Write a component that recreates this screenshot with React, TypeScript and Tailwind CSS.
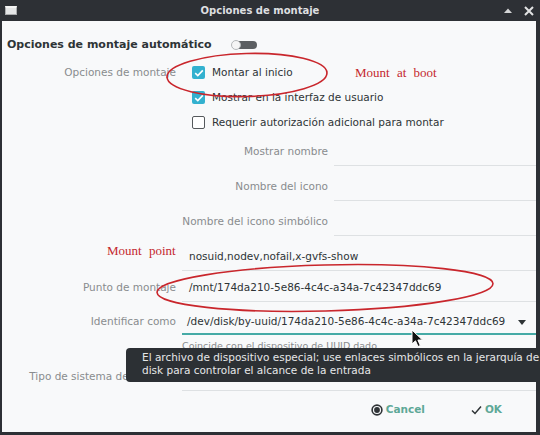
import React from "react";

const Checkbox = ({ checked }: { checked: boolean }) =>
  checked ? (
    <div className="w-[13px] h-[13px] rounded-[2px] bg-[#33b1cf] flex items-center justify-center shrink-0">
      <svg width="10" height="8" viewBox="0 0 10 8">
        <path d="M1.2 4.2 L3.8 6.6 L8.8 1.4" fill="none" stroke="#ffffff" strokeWidth="1.6" />
      </svg>
    </div>
  ) : (
    <div className="w-[13px] h-[13px] rounded-[2px] border-[1.5px] border-[#55595c] bg-white shrink-0" />
  );

const Field = ({ label, value }: { label: string; value?: string }) => (
  <div className="flex">
    <div className="w-[146px] h-[26px] flex items-center justify-end text-[#898c8e] whitespace-nowrap">{label}</div>
    <div className="ml-[6px] flex-1 h-[27px] border-b border-[#dee1e3] flex items-center pl-[7px] text-[#2e3436]">{value}</div>
  </div>
);

export default function App() {
  return (
    <div className="relative w-[540px] h-[435px] overflow-hidden bg-[#2d3035] flex flex-col font-['DejaVu_Sans',sans-serif] text-[10.5px]">
      {/* Title bar */}
      <div className="h-[21px] flex items-center shrink-0">
        <div className="w-[25px] pl-[5px] flex items-center">
          <div className="w-[12px] h-[9px] bg-[#e4e5e6] border border-[#a9abad] border-t-[2px] border-t-[#f4f4f4]" />
        </div>
        <div className="flex-1 text-center text-[#dedfe0] font-bold text-[10px] leading-[21px]">Opciones de montaje</div>
        <div className="w-[45px] pl-[9px] flex items-center">
          <svg width="8" height="5" viewBox="0 0 8 5">
            <path d="M0 5 L4 0.5 L8 5 Z" fill="#d4d5d6" />
          </svg>
          <svg className="ml-[12px]" width="10" height="10" viewBox="0 0 10 10">
            <path d="M1 1 L9 9 M9 1 L1 9" stroke="#e2e3e4" strokeWidth="2" />
          </svg>
        </div>
      </div>

      {/* Body */}
      <div className="ml-[2px] mr-[4px] mb-[3px] flex-1 bg-[#f8f9fa] flex flex-col pt-[15px]">
        <div className="h-[18px] flex items-center pl-[5px]">
          <span className="font-bold text-[11px] text-[#2e3436]">Opciones de montaje automático</span>
          <div className="relative ml-[19px] w-[26px] h-[10px]">
            <div className="absolute left-[3px] right-0 top-[1px] h-[8px] rounded-full bg-[#5c5f62]" />
            <div className="absolute left-0 top-0 w-[10px] h-[10px] rounded-full bg-[#f5f5f5] border border-[#b5b8ba]" />
          </div>
        </div>

        {/* Mount options */}
        <div className="flex mt-[6px]">
          <div className="w-[174px] h-[25px] flex items-center justify-end text-[#898c8e]">Opciones de montaje</div>
          <div className="ml-[6px] flex-1 flex flex-col">
            <div className="h-[25px] flex items-center pl-[10px] gap-[7px] text-[#2e3436]">
              <Checkbox checked />
              <span>Montar al inicio</span>
            </div>
            <div className="h-[25px] flex items-center pl-[10px] gap-[7px] text-[#2e3436]">
              <Checkbox checked />
              <span>Mostrar en la interfaz de usuario</span>
            </div>
            <div className="h-[25px] flex items-center pl-[10px] gap-[7px] text-[#2e3436]">
              <Checkbox checked={false} />
              <span>Requerir autorización adicional para montar</span>
            </div>
            <div className="mt-[4px] flex flex-col gap-[8px]">
              <Field label="Mostrar nombre" />
              <Field label="Nombre del icono" />
              <Field label="Nombre del icono simbólico" />
            </div>
          </div>
        </div>

        {/* Options text */}
        <div className="flex mt-[8px]">
          <div className="w-[174px]" />
          <div className="ml-[6px] flex-1 h-[27px] border-b border-[#dee1e3] flex items-center pl-[7px] text-[#2e3436]">
            nosuid,nodev,nofail,x-gvfs-show
          </div>
        </div>

        {/* Mount point */}
        <div className="flex mt-[4px]">
          <div className="w-[174px] h-[26px] flex items-center justify-end text-[#898c8e]">Punto de montaje</div>
          <div className="ml-[6px] flex-1 h-[27px] border-b border-[#dee1e3] flex items-center pl-[7px] text-[#2e3436]">
            /mnt/174da210-5e86-4c4c-a34a-7c42347ddc69
          </div>
        </div>

        {/* Identify as */}
        <div className="flex mt-[5px]">
          <div className="w-[174px] h-[26px] pt-[4px] flex items-center justify-end text-[#898c8e]">Identificar como</div>
          <div className="ml-[6px] flex-1 h-[28px] border-b-2 border-[#45aaa6] flex items-center pt-[4px] pl-[5px] pr-[10px] text-[#2e3436]">
            <span className="flex-1">/dev/disk/by-uuid/174da210-5e86-4c4c-a34a-7c42347ddc69</span>
            <svg width="8" height="5" viewBox="0 0 8 5">
              <path d="M0 0 L8 0 L4 5 Z" fill="#2e3436" />
            </svg>
          </div>
        </div>
        <div className="flex mt-[4px]">
          <div className="w-[174px]" />
          <div className="ml-[6px] flex-1 text-[9.5px] leading-[14px] text-[#888b8d]">Coincide con el dispositivo de UUID dado</div>
        </div>

        {/* Filesystem type */}
        <div className="flex mt-[11px]">
          <div className="w-[174px] h-[26px] flex items-center justify-end text-[#898c8e] whitespace-nowrap">Tipo de sistema de archivos</div>
          <div className="ml-[6px] flex-1 h-[27px] border-b border-[#dee1e3] flex items-center pl-[7px] text-[#2e3436]">auto</div>
        </div>

        {/* Buttons */}
        <div className="mt-[7px] h-[24px] flex items-center justify-end pr-[34px] font-bold text-[#5ea897]">
          <div className="flex items-center gap-[3px]">
            <svg width="12" height="12" viewBox="0 0 12 12">
              <circle cx="6" cy="6" r="4.9" fill="none" stroke="#2f3336" strokeWidth="1.6" />
              <circle cx="6" cy="6" r="2.9" fill="#2f3336" />
            </svg>
            <span>Cancel</span>
          </div>
          <div className="flex items-center gap-[3px] ml-[46px]">
            <svg width="11" height="10" viewBox="0 0 11 10">
              <path d="M1 5.5 L4 8.5 L10 1.5" fill="none" stroke="#2e3436" strokeWidth="1.5" />
            </svg>
            <span>OK</span>
          </div>
        </div>
      </div>

      {/* Tooltip */}
      <div className="absolute left-[126px] top-[348px] w-[460px] h-[34px] rounded-[4px] bg-[#2c3034] pl-[16px] pt-[3px] text-[#e6e7e8] text-[10.5px] leading-[13px] whitespace-nowrap">
        <div>El archivo de dispositivo especial; use enlaces simbólicos en la jerarquía de /dev/</div>
        <div>disk para controlar el alcance de la entrada</div>
      </div>

      {/* Mouse cursor */}
      <svg className="absolute left-[411px] top-[329px]" width="13" height="19" viewBox="0 0 13 19">
        <path d="M1 1 L1 15 L4.5 11.8 L7 17.5 L9.3 16.5 L6.9 11 L11.5 11 Z" fill="#111" stroke="#fff" strokeWidth="1" />
      </svg>

      {/* Red annotations */}
      <svg className="absolute left-0 top-0 pointer-events-none" width="540" height="435" viewBox="0 0 540 435">
        <ellipse cx="247" cy="75" rx="80" ry="21.5" fill="none" stroke="#c9262c" strokeWidth="1.6" transform="rotate(-1.5 247 75)" />
        <ellipse cx="325" cy="288" rx="168" ry="23" fill="none" stroke="#c9262c" strokeWidth="1.6" transform="rotate(-1.5 325 288)" />
      </svg>
      <div className="absolute left-[355px] top-[64px] leading-[18px] text-[13px] text-[#c4282e] font-['Liberation_Serif',serif] [word-spacing:4px] whitespace-nowrap">
        Mount at boot
      </div>
      <div className="absolute left-[107px] top-[242px] leading-[18px] text-[13px] text-[#c4282e] font-['Liberation_Serif',serif] [word-spacing:4px] whitespace-nowrap">
        Mount point
      </div>
    </div>
  );
}
